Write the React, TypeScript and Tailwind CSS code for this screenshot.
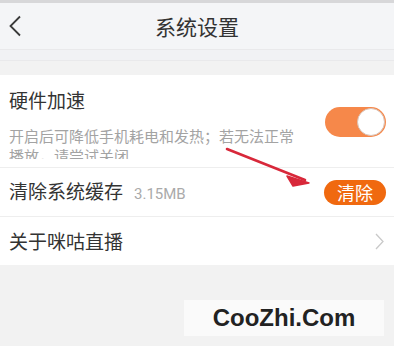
import React from "react";

export default function App() {
  const font = { fontFamily: '"Noto Sans CJK SC", "Noto Sans", sans-serif' };
  return (
    <div className="relative w-[394px] h-[346px] overflow-hidden bg-[#f2f2f2]" style={font}>
      <div className="h-[3px] bg-[#d7d7d9]" />
      <header className="h-[46px] bg-[#f4f5f7] grid grid-cols-[1fr_auto_1fr] items-center">
        <div className="pl-[8px] flex items-center">
          <svg width="14" height="22" viewBox="0 0 14 22">
            <path d="M12 1.5 L2.5 11 L12 20.5" fill="none" stroke="#3a3a3a" strokeWidth="1.8" />
          </svg>
        </div>
        <div className="text-[21px] leading-[28px] text-[#333]">系统设置</div>
        <div />
      </header>
      <div className="h-[12px] bg-[#f1f2f4] border-t border-b border-[#e9e9eb]" />
      <div className="h-[14px] bg-[#f2f2f2]" />
      <div className="bg-white">
        <div className="h-[93px] pl-[9px] pr-[8px] pt-[12px] flex items-start justify-between border-b border-[#eeeeee]">
          <div className="flex flex-col">
            <div className="text-[19px] leading-[26px] text-[#333]">硬件加速</div>
            <div className="mt-[13px] h-[33px] overflow-hidden w-[292px] text-[15px] leading-[20px] text-[#a3a3a3]">
              开启后可降低手机耗电和发热；若无法正常播放，请尝试关闭
            </div>
          </div>
          <div className="mt-[20px] w-[61px] h-[30px] rounded-full bg-[#f6884a] flex items-center justify-end pr-[1px]">
            <div className="w-[28px] h-[28px] rounded-full bg-white border border-[#d9c2b6]" />
          </div>
        </div>
        <div className="h-[49px] pl-[9px] pr-[8px] flex items-center justify-between border-b border-[#eeeeee]">
          <div className="flex items-baseline">
            <span className="text-[19px] leading-[26px] text-[#333]">清除系统缓存</span>
            <span className="ml-[11px] text-[15px] text-[#aaaaaa]" style={{ fontFamily: '"Roboto", sans-serif' }}>3.15MB</span>
          </div>
          <div className="w-[62px] h-[25px] rounded-full bg-[#f0690f] flex items-center justify-center text-[18px] leading-[25px] text-white">
            清除
          </div>
        </div>
        <div className="h-[48px] pl-[9px] pr-[10px] flex items-center justify-between">
          <span className="text-[19px] leading-[26px] text-[#333]">关于咪咕直播</span>
          <svg width="9" height="17" viewBox="0 0 9 17">
            <path d="M1 1 L8 8.5 L1 16" fill="none" stroke="#c9c9c9" strokeWidth="1.3" />
          </svg>
        </div>
      </div>
      <div className="mt-[35px] ml-[184px] w-[200px] h-[36px] bg-[#fafafa] flex items-center justify-center">
        <span className="text-[24px] font-bold text-[#222]" style={{ fontFamily: '"Liberation Sans", Arial, sans-serif' }}>
          CooZhi.Com
        </span>
      </div>
      <svg className="absolute left-0 top-0" width="394" height="346" viewBox="0 0 394 346">
        <path d="M227 149 L305 180" stroke="#d8283a" strokeWidth="2.6" strokeLinecap="round" />
        <path d="M309 183 L287 176 L293 186 Z" fill="#d8283a" stroke="#d8283a" strokeWidth="1.5" strokeLinejoin="round" />
      </svg>
    </div>
  );
}
